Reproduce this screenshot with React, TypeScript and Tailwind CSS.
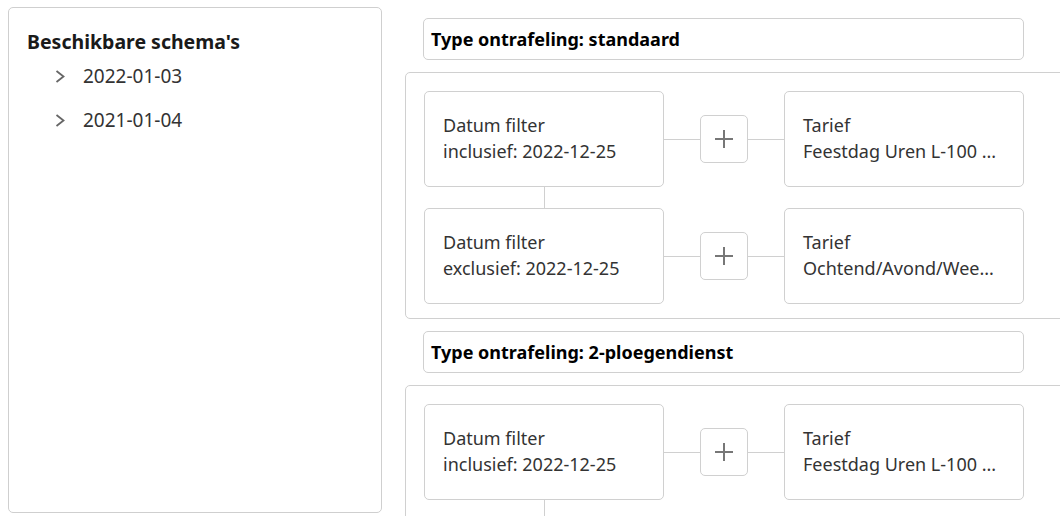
type Tnode = {
  left: [string, string];
  right: [string, string];
};

type Tgroup = {
  title: string;
  rows: Tnode[];
};

const groups: Tgroup[] = [
  {
    title: "Type ontrafeling: standaard",
    rows: [
      {
        left: ["Datum filter", "inclusief: 2022-12-25"],
        right: ["Tarief", "Feestdag Uren L-100 ..."],
      },
      {
        left: ["Datum filter", "exclusief: 2022-12-25"],
        right: ["Tarief", "Ochtend/Avond/Wee..."],
      },
    ],
  },
  {
    title: "Type ontrafeling: 2-ploegendienst",
    rows: [
      {
        left: ["Datum filter", "inclusief: 2022-12-25"],
        right: ["Tarief", "Feestdag Uren L-100 ..."],
      },
      {
        left: ["Datum filter", "exclusief: 2022-12-25"],
        right: ["Tarief", "Ochtend/Avond/Wee..."],
      },
    ],
  },
];

const schemas = ["2022-01-03", "2021-01-04"];

const NodeBox = ({ lines }: { lines: [string, string] }) => (
  <div className="w-[240px] h-[96px] shrink-0 border border-[#d0d0d0] rounded-[5px] bg-white px-[18px] pb-[3px] flex flex-col justify-center text-[18px] leading-[26px] text-[#333]">
    <span className="whitespace-nowrap">{lines[0]}</span>
    <span className="whitespace-nowrap">{lines[1]}</span>
  </div>
);

const Row = ({ node }: { node: Tnode }) => (
  <div className="flex items-center">
    <NodeBox lines={node.left} />
    <div className="w-[36px] h-px bg-[#d0d0d0]" />
    <button className="w-[48px] h-[48px] shrink-0 border border-[#d0d0d0] rounded-[5px] bg-white flex items-center justify-center">
      <svg width="18" height="18" viewBox="0 0 18 18">
        <path d="M9 0v18M0 9h18" stroke="#777" strokeWidth="2" fill="none" />
      </svg>
    </button>
    <div className="w-[36px] h-px bg-[#d0d0d0]" />
    <NodeBox lines={node.right} />
  </div>
);

export default function App() {
  return (
    <div
      className="w-[1060px] h-[516px] overflow-hidden bg-white flex"
      style={{ fontFamily: '"Noto Sans", "Open Sans", sans-serif' }}
    >
      <div className="mt-[7px] ml-[8px] w-[374px] h-[506px] shrink-0 border border-[#cfcfcf] rounded-[5px] pt-[21px] pl-[18px]">
        <h2 className="text-[19.5px] font-bold text-[#1a1a1a] leading-[26px]">
          Beschikbare schema's
        </h2>
        <ul className="-mt-px">
          {schemas.map((s) => (
            <li key={s} className="flex items-center h-[44px]">
              <svg
                width="10"
                height="13"
                viewBox="0 0 10 13"
                className="ml-[28px] mr-[18px]"
              >
                <path
                  d="M1.5 1l7 5.5-7 5.5"
                  stroke="#666"
                  strokeWidth="1.8"
                  fill="none"
                />
              </svg>
              <span className="text-[19px] text-[#333]">{s}</span>
            </li>
          ))}
        </ul>
      </div>

      <div className="ml-[23px] w-[700px] shrink-0 flex flex-col">
        {groups.map((g) => (
          <div key={g.title} className="flex flex-col">
            <div className="mt-[18px] ml-[18px] w-[601px] h-[42px] border border-[#d0d0d0] rounded-[5px] px-[7px] flex items-center text-[18px] font-bold text-black">
              {g.title}
            </div>
            <div className="mt-[12px] border border-[#d0d0d0] rounded-l-[5px] pt-[18px] pl-[18px] pb-[14px] mb-[-6px]">
              {g.rows.map((r, i) => (
                <div key={i}>
                  {i > 0 && (
                    <div className="ml-[120px] w-px h-[21px] bg-[#d0d0d0]" />
                  )}
                  <Row node={r} />
                </div>
              ))}
            </div>
          </div>
        ))}
      </div>
    </div>
  );
}
